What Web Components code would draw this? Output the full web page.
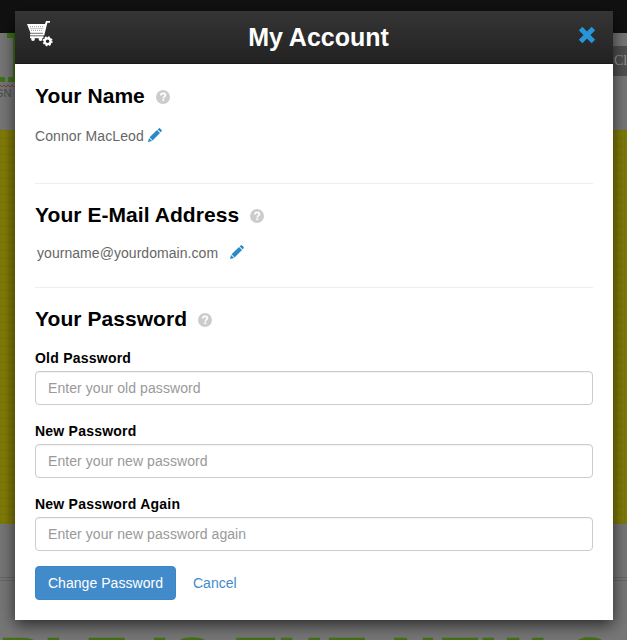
<!DOCTYPE html>
<html lang="en"><head><meta charset="utf-8"><title>My Account</title>
<style>
html,body{margin:0;height:640px;overflow:hidden;background:#777}
body{font:14px/20px "Liberation Sans",Arial,sans-serif}
</style></head><body>
<account-page></account-page>
<script>
const define=(name,html,init)=>customElements.define(name,class extends HTMLElement{
 constructor(){super();this.attachShadow({mode:'open'}).innerHTML=html;}
 connectedCallback(){if(init)init.call(this,this.shadowRoot);}
});

define('help-icon',`<style>:host{display:block;width:14px;height:14px}svg{display:block}</style>
<svg width="14" height="14" viewBox="0 0 14 14"><circle cx="7" cy="7" r="7" fill="#ccc"/><path d="M4.8 5.5C4.9 3.8 6 3.4 7.1 3.4c1.3 0 2.3.7 2.3 1.9C9.400 6.700 7.300 6.700 7.300 8.400" fill="none" stroke="#fff" stroke-width="1.7"/><rect x="6.300" y="9.300" width="1.900" height="1.800" fill="#fff"/></svg>`);

define('pencil-icon',`<style>:host{display:block;width:14px;height:14px}svg{display:block}</style>
<svg width="14" height="14" viewBox="0 0 14 14" fill="#2a8ac5"><path d="M0 14l1-4.100 3.100 3.100zM1.600 9.200l7.400-7.200 3 3-7.400 7.400zM9.700 1.400l1-1q.7-.6 1.400 0l1.500 1.500q.6.700 0 1.400l-1 1z"/></svg>`);

define('cart-icon',`<style>:host{display:block;width:26px;height:26px}svg{display:block}</style>
<svg width="26" height="26" viewBox="0 0 26 26"><path fill="#fff" d="M0 3h18l1-3h4v1.800h-2.600L17.200 14.500H3.300l-.4-1.500h1z"/><path d="M3 5.700h13.500M3.500 7.500h12.700M4 9.300h12" stroke="#777" stroke-width=".8" stroke-dasharray="1 1"/><path d="M4 12.300h12" stroke="#333" stroke-width=".7"/><path fill="#fff" d="M3 15.200h13.500v2H3z"/><circle cx="6" cy="18" r="1.900" fill="#fff"/><circle cx="13.500" cy="18" r="1.900" fill="#fff"/><circle cx="20.600" cy="20.200" r="5.200" fill="#2a2a2a"/><circle cx="20.600" cy="20.200" r="2.900" fill="none" stroke="#fff" stroke-width="2.200"/><circle cx="20.600" cy="20.200" r="4.200" fill="none" stroke="#fff" stroke-width="1.700" stroke-dasharray="1.800 1.499"/></svg>`);

define('close-icon',`<style>:host{display:block;width:18px;height:18px}svg{display:block}</style>
<svg width="18" height="18" viewBox="0 0 18 18"><path d="M2.600 2.600l12.800 12.800M15.400 2.600L2.600 15.400" stroke="#2795d9" stroke-width="5"/></svg>`);

define('modal-header',`<style>:host{box-sizing:border-box;display:grid;grid-template-columns:26px 1fr 18px;height:53px;padding:0 17px 0 12px;background:linear-gradient(#353535,#222);border-bottom:1px solid #191919}
h1{margin:0;padding-left:6px;font:bold 25px/53px "Liberation Sans",Arial,sans-serif;color:#fff;text-align:center}
cart-icon{margin-top:10px}close-icon{margin-top:15px}</style>
<cart-icon></cart-icon><h1><slot></slot></h1><close-icon></close-icon>`);

define('section-title',`<style>:host{display:flex;align-items:center;gap:11px;height:24px}
h2{margin:0;font:bold 21px/24px "Liberation Sans",Arial,sans-serif;letter-spacing:.06px;color:#000}help-icon{margin-top:2px}</style>
<h2><slot></slot></h2><help-icon></help-icon>`);

define('editable-value',`<style>:host{display:flex;height:20px;gap:var(--gap,4px);letter-spacing:var(--track,.1px);color:#666}pencil-icon{margin-top:2px}</style><span><slot></slot></span><pencil-icon></pencil-icon>`);

define('password-field',`<style>:host{display:block;height:73px}label{display:block;font-weight:bold;font-size:14px;line-height:20px;letter-spacing:.23px;color:#000}
input{display:block;box-sizing:border-box;width:100%;height:34px;margin:3px 0 0;padding:6px 12px;border:1px solid #ccc;border-radius:4px;background:#fff;font:14px/20px "Liberation Sans",Arial,sans-serif;letter-spacing:.07px;box-shadow:inset 0 1px 1px rgba(0,0,0,.05)}input::placeholder{color:#999;opacity:1}</style>
<label for="p"></label><input id="p" type="text">`,function(r){
 r.querySelector('label').textContent=this.getAttribute('label');
 r.querySelector('input').placeholder=this.getAttribute('hint');
});

define('form-actions',`<style>:host{display:flex;align-items:center;gap:17px}
button{box-sizing:border-box;width:141px;height:34px;border:1px solid #3d86c6;border-radius:4px;padding:0;background:#428bca;color:#fff;font:14px/20px "Liberation Sans",Arial,sans-serif;letter-spacing:.05px}
a{color:#428bca;text-decoration:none}</style><button>Change Password</button><a href="#">Cancel</a>`);

define('account-modal',`<style>:host{display:block;width:598px;height:609px;background:#fff;box-shadow:0 5px 15px rgba(0,0,0,.65)}
.body{padding:20px 20px 0}
section{box-sizing:border-box}
.name{height:100px;border-bottom:1px solid #eee}
.name editable-value{margin-top:18px}
.email{height:104px;padding-top:19px;border-bottom:1px solid #eee}
.email editable-value{--gap:12px;--track:.05px;margin:16px 0 0 2px}
.password{padding-top:19px}
.password section-title{margin-bottom:17px}
form-actions{margin-top:-1px}</style>
<modal-header>My Account</modal-header><div class="body">
<section class="name"><section-title>Your Name</section-title><editable-value>Connor MacLeod</editable-value></section>
<section class="email"><section-title>Your E-Mail Address</section-title><editable-value>yourname@yourdomain.com</editable-value></section>
<section class="password"><section-title>Your Password</section-title>
<password-field label="Old Password" hint="Enter your old password"></password-field>
<password-field label="New Password" hint="Enter your new password"></password-field>
<password-field label="New Password Again" hint="Enter your new password again"></password-field>
<form-actions></form-actions></section></div>`);

define('site-backdrop',`<style>:host{display:flex;flex-direction:column;height:640px;background:#777;overflow:hidden}
.bar{height:33px;flex:none;background:#111}
.top{height:97px;flex:none;display:flex;justify-content:space-between}
.logo{width:15px;height:70px}.logo svg{display:block}
.search{box-sizing:border-box;width:15px;height:30px;margin-top:13px;padding-left:2px;background:#505050;color:#999;font:14px/30px "Liberation Serif",serif;overflow:hidden}
.hero{height:394px;flex:none;background:repeating-linear-gradient(90deg,rgba(0,0,0,.04) 0 1px,transparent 1px 8px),repeating-linear-gradient(rgba(0,0,0,.04) 0 1px,transparent 1px 8px),#827d08}
.rule{height:2px;flex:none;margin-top:53px;border-top:1px solid #666;border-bottom:1px solid #666}
.headline{flex:none;margin:47px 0 0 0;white-space:nowrap;color:#467018;font:bold 62px/64px "Liberation Sans",Arial,sans-serif;letter-spacing:3.300px;-webkit-text-stroke:2.500px #467018}</style>
<div class="bar"></div><div class="top"><div class="logo"><svg width="15" height="70"><path d="M7 0h8v5H7zM13 5h2v44h-2zM0 44h5v5H0zM8 44h7v5H8z" fill="#3f7518"/><path d="M0 52l2 2 2-2 2 2 2-2 2 2 2-2 2 2" fill="none" stroke="#803030" stroke-width=".8"/><text x="-5" y="64" font-family="Liberation Sans" font-size="11" fill="#4c4c4c">GN</text></svg></div><div class="search">Cl</div></div>
<div class="hero"></div><div class="rule"></div><div class="headline">PLE IS THE NEW C</div>`);

define('account-page',`<style>:host{display:block;position:relative;width:627px;height:640px;overflow:hidden}account-modal{position:absolute;left:15px;top:11px}</style><site-backdrop></site-backdrop><account-modal></account-modal>`);
</script></body></html>
